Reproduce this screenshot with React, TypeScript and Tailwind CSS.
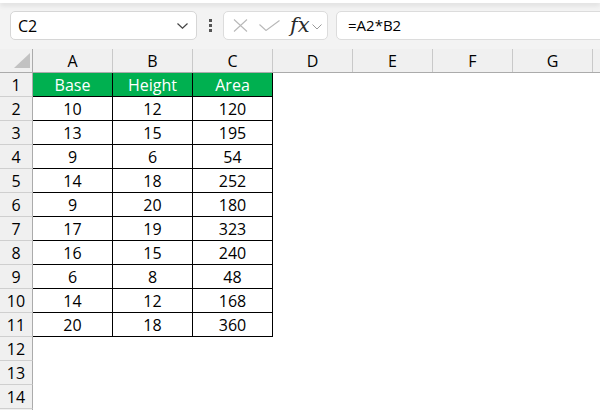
import React from "react";

const data: (string | number)[][] = [
  ["Base", "Height", "Area"],
  [10, 12, 120],
  [13, 15, 195],
  [9, 6, 54],
  [14, 18, 252],
  [9, 20, 180],
  [17, 19, 323],
  [16, 15, 240],
  [6, 8, 48],
  [14, 12, 168],
  [20, 18, 360],
];

const cols = ["A", "B", "C", "D", "E", "F", "G", ""];
const font = { fontFamily: '"Open Sans", "Noto Sans", "Liberation Sans", sans-serif' };

export default function App() {
  const rows = Array.from({ length: 15 }, (_, i) => i + 1);
  return (
    <div
      className="w-[600px] h-[410px] overflow-hidden bg-white text-black flex flex-col"
      style={font}
    >
      {/* Formula bar area */}
      <div className="h-[49px] shrink-0 bg-[#f3f3f3] flex flex-col">
        <div className="h-[3px] bg-white shadow-[0_2px_5px_rgba(0,0,0,0.13)] relative z-10" />
        <div className="mt-[8px] h-[29px] flex items-stretch pl-[10px]">
          {/* Name box */}
          <div className="w-[187px] shrink-0 bg-white border border-[#d6d6d6] rounded-[5px] flex items-center justify-between pl-[7px] pr-[8px]">
            <span className="text-[16px] leading-none">C2</span>
            <svg width="11" height="6" viewBox="0 0 11 6" fill="none">
              <path d="M0.5 0.5 L5.5 5.2 L10.5 0.5" stroke="#444" strokeWidth="1.2" />
            </svg>
          </div>
          {/* dots */}
          <div className="w-[26px] shrink-0 flex flex-col items-center justify-center gap-[2px]">
            <div className="w-[3px] h-[3px] bg-[#555]" />
            <div className="w-[3px] h-[3px] bg-[#555]" />
            <div className="w-[3px] h-[3px] bg-[#555]" />
          </div>
          {/* fx box */}
          <div className="w-[105px] shrink-0 bg-white border border-[#dcdcdc] rounded-[5px] flex items-center pl-[9px]">
            <svg width="15" height="13" viewBox="0 0 15 13" fill="none">
              <path d="M1 0.5 L14 12.5 M14 0.5 L1 12.5" stroke="#b8b8b8" strokeWidth="1.1" />
            </svg>
            <svg className="ml-[11px]" width="21" height="11" viewBox="0 0 21 11" fill="none">
              <path d="M0.5 4.5 L7 10.5 L20.5 0.5" stroke="#b8b8b8" strokeWidth="1.1" />
            </svg>
            <span
              className="ml-[10px] text-[21px] italic leading-none text-[#2a2a2a]"
              style={{ fontFamily: '"DejaVu Serif", "Liberation Serif", serif' }}
            >
              fx
            </span>
            <svg className="ml-[2px] mt-[2px]" width="10" height="6" viewBox="0 0 10 6" fill="none">
              <path d="M0.5 0.5 L5 5 L9.5 0.5" stroke="#9a9a9a" strokeWidth="1" />
            </svg>
          </div>
          {/* formula */}
          <div className="ml-[8px] flex-1 -mr-[8px] bg-white border border-[#dcdcdc] rounded-[5px] flex items-center pl-[11px]">
            <span className="text-[15px] leading-none">=A2*B2</span>
          </div>
        </div>
      </div>

      {/* Column headers */}
      <div className="flex h-[24px] shrink-0 bg-[#f0f0f0] border-b border-[#ababab]">
        <div className="w-[33px] shrink-0 border-r border-[#ababab] relative">
          <svg className="absolute left-[14px] top-[4px]" width="16" height="15" viewBox="0 0 16 15">
            <polygon points="16,0 16,15 0,15" fill="#c2c2c2" />
          </svg>
        </div>
        {cols.map((c, i) => (
          <div
            key={i}
            className="w-[80px] shrink-0 border-r border-[#c9c9c9] flex items-center justify-center text-[16px]"
          >
            {c}
          </div>
        ))}
      </div>

      {/* Rows */}
      {rows.map((r) => {
        const rowData = data[r - 1];
        return (
          <div key={r} className="flex h-[24px] shrink-0">
            <div className="w-[33px] shrink-0 bg-[#f0f0f0] border-r border-[#ababab] border-b border-b-[#cfcfcf] flex items-center justify-center text-[16px]">
              {r < 15 ? r : ""}
            </div>
            {cols.map((c, ci) => {
              if (rowData && ci < 3) {
                const header = r === 1;
                return (
                  <div
                    key={ci}
                    className={
                      header
                        ? "w-[80px] shrink-0 border-r border-b border-black bg-[#00b050] text-white flex items-center justify-center text-[16px]"
                        : "w-[80px] shrink-0 border-r border-b border-black flex items-center justify-center text-[16px]"
                    }
                  >
                    {rowData[ci]}
                  </div>
                );
              }
              return <div key={ci} className="w-[80px] shrink-0" />;
            })}
          </div>
        );
      })}
    </div>
  );
}
